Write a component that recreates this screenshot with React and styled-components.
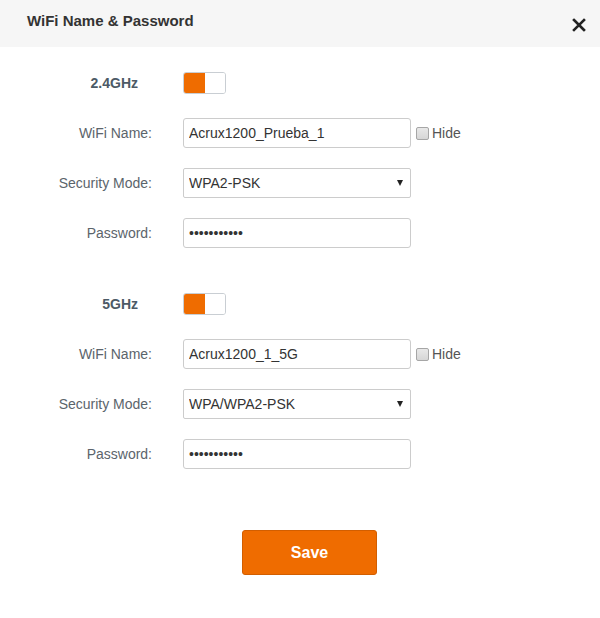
import React from "react";
import styled, { createGlobalStyle } from "styled-components";

const GlobalStyle = createGlobalStyle`
  body {
    margin: 0;
    background: #fff;
    font-family: Arial, "Liberation Sans", sans-serif;
  }
`;

const sections = [
  { band: "2.4GHz", name: "Acrux1200_Prueba_1", mode: "WPA2-PSK" },
  { band: "5GHz", name: "Acrux1200_1_5G", mode: "WPA/WPA2-PSK" },
];

function Toggle({ on }) {
  return (
    <Switch>
      <Half $fill={on ? "#ef6c00" : "#fff"} />
      <Half $fill={on ? "#fff" : "#ef6c00"} />
    </Switch>
  );
}

function Section({ band, name, mode }) {
  return (
    <Block>
      <Row>
        <BandLabel>{band}</BandLabel>
        <Toggle on />
      </Row>
      <Row>
        <Label>WiFi Name:</Label>
        <TextInput defaultValue={name} />
        <HideBox>
          <input type="checkbox" />
          Hide
        </HideBox>
      </Row>
      <Row>
        <Label>Security Mode:</Label>
        <SelectWrap>
          <Select defaultValue={mode}>
            <option>WPA-PSK</option>
            <option>WPA2-PSK</option>
            <option>WPA/WPA2-PSK</option>
          </Select>
        </SelectWrap>
      </Row>
      <Row>
        <Label>Password:</Label>
        <TextInput type="password" defaultValue="Prueba12345" />
      </Row>
    </Block>
  );
}

export default function App() {
  return (
    <>
      <GlobalStyle />
      <Dialog>
        <Header>
          <Title>WiFi Name &amp; Password</Title>
          <Close aria-label="close">
            <svg width="14" height="14" viewBox="0 0 14 14">
              <path
                d="M2 2 L12 12 M12 2 L2 12"
                stroke="#222"
                strokeWidth="2.6"
                strokeLinecap="square"
              />
            </svg>
          </Close>
        </Header>
        <Form>
          {sections.map((s) => (
            <Section key={s.band} {...s} />
          ))}
          <Footer>
            <SaveButton>Save</SaveButton>
          </Footer>
        </Form>
      </Dialog>
    </>
  );
}

//Styled components
const Dialog = styled.div`
  width: 600px;
  height: 618px;
  background: #fff;
`;

const Header = styled.div`
  height: 47px;
  background: #f6f6f6;
  display: flex;
  align-items: center;
  justify-content: space-between;
  padding: 0 14px 0 27px;
  box-sizing: border-box;
`;

const Title = styled.h2`
  margin: 0 0 6px;
  font-size: 15px;
  font-weight: 700;
  color: #333;
`;

const Close = styled.button`
  border: 0;
  background: none;
  padding: 0;
  margin-top: 3px;
  display: flex;
  cursor: pointer;
`;

const Form = styled.div`
  padding-top: 11px;
  display: flex;
  flex-direction: column;
  gap: 21px;
`;

const Block = styled.div`
  display: flex;
  flex-direction: column;
`;

const Row = styled.div`
  height: 50px;
  display: flex;
  align-items: center;
  gap: 31px;
`;

const Label = styled.label`
  width: 152px;
  text-align: right;
  font-size: 14px;
  color: #5b646b;
`;

const BandLabel = styled(Label)`
  padding-right: 14px;
  box-sizing: border-box;
  font-weight: 700;
  color: #4c5a66;
`;

const Switch = styled.div`
  width: 43px;
  height: 22px;
  box-sizing: border-box;
  border: 1px solid #c9ced3;
  border-radius: 3px;
  display: flex;
  overflow: hidden;
`;

const Half = styled.span`
  flex: 1;
  background: ${(p) => p.$fill};
`;

const TextInput = styled.input`
  width: 228px;
  height: 30px;
  box-sizing: border-box;
  border: 1px solid #ccc;
  border-radius: 3px;
  padding: 0 5px;
  font: 14px Arial, "Liberation Sans", sans-serif;
  color: #333;
  outline: none;
`;

const HideBox = styled.label`
  margin-left: -26px;
  display: flex;
  align-items: center;
  gap: 3px;
  font-size: 14px;
  color: #555;
  input {
    appearance: none;
    width: 13px;
    height: 13px;
    margin: 0;
    box-sizing: border-box;
    border: 1px solid #a6a6a6;
    border-radius: 2px;
    background: linear-gradient(#e8e8e8, #d6d6d6);
  }
`;

const SelectWrap = styled.div`
  position: relative;
  &::after {
    content: "";
    position: absolute;
    right: 8px;
    top: 12px;
    border-left: 3.5px solid transparent;
    border-right: 3.5px solid transparent;
    border-top: 6px solid #222;
    pointer-events: none;
  }
`;

const Select = styled.select`
  appearance: none;
  width: 228px;
  height: 30px;
  box-sizing: border-box;
  border: 1px solid #ccc;
  border-radius: 2px;
  padding: 0 5px;
  background: #fff;
  font: 14px Arial, "Liberation Sans", sans-serif;
  color: #333;
  outline: none;
`;

const Footer = styled.div`
  display: flex;
  justify-content: center;
  padding-top: 30px;
  padding-left: 19px;
`;

const SaveButton = styled.button`
  width: 135px;
  height: 45px;
  border: 1px solid #d25e00;
  border-radius: 3px;
  background: #ef6c00;
  color: #fff;
  font: 700 16px Arial, "Liberation Sans", sans-serif;
  cursor: pointer;
`;
